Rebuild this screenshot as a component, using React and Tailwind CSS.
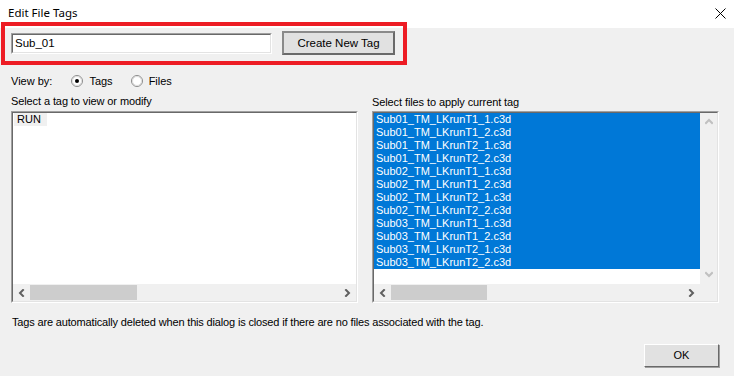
import React from "react";

const Chevron = ({ dir, color = "#606060" }) => {
  const pts = {
    left: "5,1 2,4 5,7",
    right: "2,1 5,4 2,7",
    up: "1,5 4,2 7,5",
    down: "1,2 4,5 7,2",
  }[dir];
  return (
    <svg width="8" height="8" viewBox="0 0 8 8" className="block">
      <polyline points={pts} fill="none" stroke={color} strokeWidth="2" strokeLinecap="square" />
    </svg>
  );
};

const Radio = ({ checked }) => (
  <svg width="12" height="12" viewBox="0 0 12 12" className="block">
    <circle cx="6" cy="6" r="5.5" fill="#fff" stroke="#8a8a8a" strokeWidth="1" />
    <circle cx="6" cy="6" r="4.5" fill="none" stroke="#dcdcdc" strokeWidth="1" />
    {checked && <circle cx="6" cy="6" r="2" fill="#000" />}
  </svg>
);

const HScroll = ({ thumbLeft, thumbWidth }) => (
  <div className="flex h-[17px] items-stretch bg-[#f0f0f0]">
    <div className="flex w-[17px] items-center justify-center">
      <Chevron dir="left" />
    </div>
    <div className="flex-1 py-[1px]" style={{ paddingLeft: thumbLeft }}>
      <div className="h-full bg-[#cdcdcd]" style={{ width: thumbWidth }} />
    </div>
    <div className="flex w-[17px] items-center justify-center">
      <Chevron dir="right" />
    </div>
  </div>
);

const Sunken = ({ children, className = "" }) => (
  <div className={"border border-t-[#a0a0a0] border-l-[#a0a0a0] border-r-white border-b-white " + className}>
    <div className="flex h-full flex-col border border-t-[#696969] border-l-[#696969] border-r-[#e3e3e3] border-b-[#e3e3e3] bg-white">
      {children}
    </div>
  </div>
);

const files = [
  "Sub01_TM_LKrunT1_1.c3d",
  "Sub01_TM_LKrunT1_2.c3d",
  "Sub01_TM_LKrunT2_1.c3d",
  "Sub01_TM_LKrunT2_2.c3d",
  "Sub02_TM_LKrunT1_1.c3d",
  "Sub02_TM_LKrunT1_2.c3d",
  "Sub02_TM_LKrunT2_1.c3d",
  "Sub02_TM_LKrunT2_2.c3d",
  "Sub03_TM_LKrunT1_1.c3d",
  "Sub03_TM_LKrunT1_2.c3d",
  "Sub03_TM_LKrunT2_1.c3d",
  "Sub03_TM_LKrunT2_2.c3d",
];

export default function App() {
  return (
    <div
      className="relative flex h-[376px] w-[734px] flex-col overflow-hidden bg-[#f0f0f0] text-[11px] leading-[13px] text-black"
      style={{ fontFamily: '"Liberation Sans", Arial, sans-serif' }}
    >
      {/* Title bar */}
      <div className="flex h-[28px] shrink-0 items-center justify-between bg-white pl-[8px] pr-[8px] pb-[4px]">
        <span className="text-[11.5px]" style={{ fontFamily: '"Noto Sans", sans-serif' }}>
          Edit File Tags
        </span>
        <svg width="11" height="11" viewBox="0 0 11 11" className="mt-[2px]">
          <path d="M0.5 0.5 L10.5 10.5 M10.5 0.5 L0.5 10.5" stroke="#000" strokeWidth="1" />
        </svg>
      </div>

      <div className="flex flex-1 flex-col pl-[11px] pr-[15px]">
        {/* Row 1 */}
        <div className="mt-[3px] flex h-[24px] items-center">
          <div className="flex h-[21px] w-[261px] items-center border border-t-[#a0a0a0] border-l-[#a0a0a0] border-r-white border-b-white">
            <div className="flex h-full w-full items-center border border-t-[#696969] border-l-[#696969] border-r-[#e3e3e3] border-b-[#e3e3e3] bg-white pl-[2px] text-[11.5px]">
              Sub_01
            </div>
          </div>
          <div className="ml-[10px] flex h-[24px] w-[113px] items-center justify-center border-2 border-t-[#8a8a8a] border-l-[#8a8a8a] border-r-[#6a6a6a] border-b-[#6a6a6a] bg-[#e1e1e1] text-[11.5px]">
            Create New Tag
          </div>
        </div>

        {/* View by */}
        <div className="mt-[19px] flex h-[14px] items-center">
          <span>View by:</span>
          <div className="ml-[19px]">
            <Radio checked />
          </div>
          <span className="ml-[6px]">Tags</span>
          <div className="ml-[18px]">
            <Radio />
          </div>
          <span className="ml-[6px]">Files</span>
        </div>

        {/* Lists */}
        <div className="mt-[7px] flex gap-[14px]">
          <div className="flex w-[347px] flex-col">
            <div className="h-[16px] tracking-[-0.1px]">Select a tag to view or modify</div>
            <Sunken className="h-[192px]">
              <div className="flex-1">
                <div className="ml-[1px] inline-block bg-[#f0f0f0] pl-[3px] pr-[6px]">RUN</div>
              </div>
              <HScroll thumbLeft={0} thumbWidth={107} />
            </Sunken>
          </div>
          <div className="flex w-[347px] flex-col pt-[1px]">
            <div className="h-[15px] tracking-[-0.1px]">Select files to apply current tag</div>
            <Sunken className="h-[192px]">
              <div className="flex flex-1">
                <div className="flex flex-1 flex-col">
                  <div className="flex-1">
                    {files.map((f) => (
                      <div key={f} className="h-[13px] bg-[#0078d7] pl-[2px] text-white">
                        {f}
                      </div>
                    ))}
                  </div>
                </div>
                <div className="flex w-[17px] flex-col items-center justify-between bg-[#f0f0f0] py-[5px]">
                  <Chevron dir="up" color="#c0c0c0" />
                  <Chevron dir="down" color="#c0c0c0" />
                </div>
              </div>
              <div className="flex">
                <div className="flex-1">
                  <HScroll thumbLeft={0} thumbWidth={96} />
                </div>
                <div className="h-[17px] w-[17px] bg-[#f0f0f0]" />
              </div>
            </Sunken>
          </div>
        </div>

        <div className="mt-[13px] pl-[1px] tracking-[-0.16px]">
          Tags are automatically deleted when this dialog is closed if there are no files associated with the tag.
        </div>

        <div className="mt-[15px] flex justify-end">
          <div className="flex h-[23px] w-[75px] items-center justify-center border border-t-white border-l-white border-r-[#696969] border-b-[#696969] bg-[#e1e1e1] shadow-[1px_1px_0_#a0a0a0]">
            OK
          </div>
        </div>
      </div>

      {/* Annotation overlay */}
      <div className="pointer-events-none absolute left-[1px] top-[22px] h-[43px] w-[406px] border-4 border-[#ed1c24]" />
    </div>
  );
}
